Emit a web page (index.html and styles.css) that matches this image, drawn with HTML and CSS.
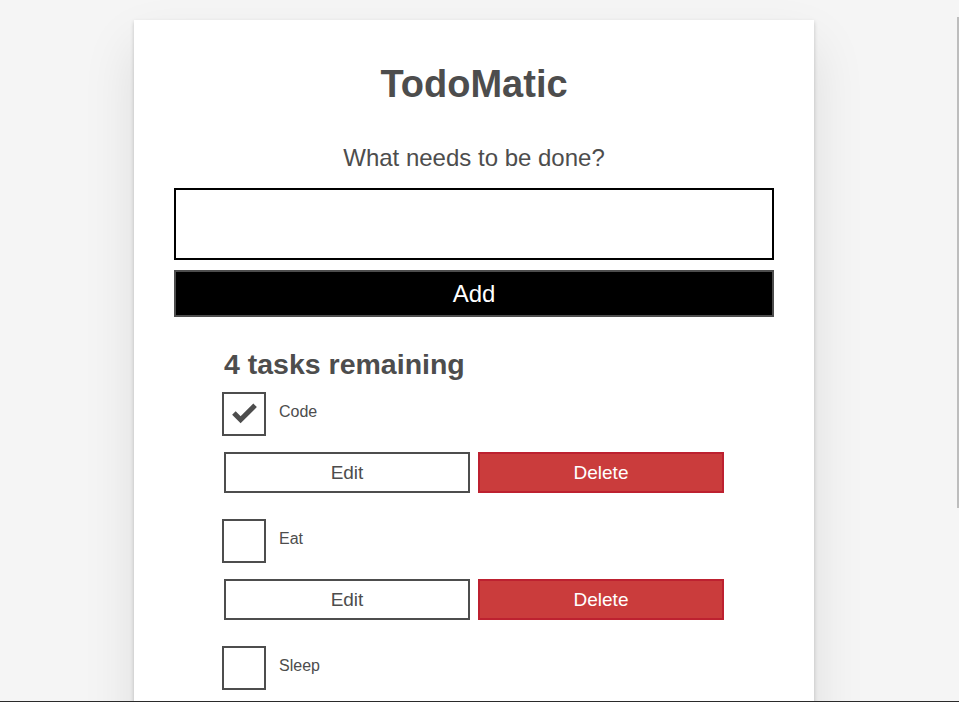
FILE: index.html
```html
<!DOCTYPE html>
<html lang="en">
<head>
<meta charset="utf-8">
<title>TodoMatic</title>
<link rel="stylesheet" href="styles.css">
</head>
<body>
<div class="page">
  <main class="todoapp">
    <h1 class="title">TodoMatic</h1>
    <form class="new-todo">
      <label class="label-lg" for="new-todo-input">What needs to be done?</label>
      <input class="input-lg" id="new-todo-input" type="text" autocomplete="off">
      <button class="btn btn-primary btn-lg" type="button">Add</button>
    </form>
    <section class="list-section">
      <h2 class="list-heading">4 tasks remaining</h2>
      <ul class="todo-list">
        <li class="todo">
          <div class="cb-row">
            <span class="cb-box">
              <svg class="check" width="40" height="40" viewBox="0 0 40 40"><polyline points="9.9,19.1 16.6,25.8 31.1,11.3" fill="none" stroke="#4d4d4d" stroke-width="5" stroke-linejoin="miter" stroke-linecap="butt"/></svg>
            </span>
            <span class="cb-label">Code</span>
          </div>
          <div class="btn-group">
            <button class="btn btn-plain" type="button">Edit</button>
            <button class="btn btn-danger" type="button">Delete</button>
          </div>
        </li>
        <li class="todo">
          <div class="cb-row">
            <span class="cb-box"></span>
            <span class="cb-label">Eat</span>
          </div>
          <div class="btn-group">
            <button class="btn btn-plain" type="button">Edit</button>
            <button class="btn btn-danger" type="button">Delete</button>
          </div>
        </li>
        <li class="todo">
          <div class="cb-row">
            <span class="cb-box"></span>
            <span class="cb-label">Sleep</span>
          </div>
          <div class="btn-group">
            <button class="btn btn-plain" type="button">Edit</button>
            <button class="btn btn-danger" type="button">Delete</button>
          </div>
        </li>
        <li class="todo">
          <div class="cb-row">
            <span class="cb-box"></span>
            <span class="cb-label">Repeat</span>
          </div>
          <div class="btn-group">
            <button class="btn btn-plain" type="button">Edit</button>
            <button class="btn btn-danger" type="button">Delete</button>
          </div>
        </li>
      </ul>
    </section>
  </main>
</div>
<div class="scroll-thumb"></div>
<div class="bottom-edge"></div>
</body>
</html>
```

FILE: styles.css
```css
html, body {
  margin: 0;
  padding: 0;
  height: 100%;
  overflow: hidden;
}

body {
  background: #f5f5f5;
  color: #4d4d4d;
  font-family: Arial, "Liberation Sans", sans-serif;
  font-size: 16px;
  line-height: 1.25;
}

.page {
  width: 948px;
  display: flex;
  justify-content: center;
}

.todoapp {
  width: 680px;
  box-sizing: border-box;
  background: #fff;
  margin: 20px 0 40px;
  padding: 40px;
  box-shadow: 0 2px 4px 0 rgba(0, 0, 0, 0.2), 0 25px 50px 0 rgba(0, 0, 0, 0.1);
  display: flex;
  flex-direction: column;
}

.title {
  margin: 0;
  padding-top: 2px;
  text-align: center;
  font-size: 38px;
  line-height: 45px;
  font-weight: bold;
}

.new-todo {
  display: flex;
  flex-direction: column;
  margin-top: 31px;
}

.label-lg {
  display: block;
  text-align: center;
  font-size: 24px;
  line-height: 24px;
  padding: 8px;
  margin-bottom: 10px;
}

.input-lg {
  box-sizing: border-box;
  width: 100%;
  height: 72px;
  margin: 0;
  padding: 20px;
  border: 2px solid #000;
  font: 24px Arial, "Liberation Sans", sans-serif;
  color: #4d4d4d;
  background: #fff;
  outline: none;
}

.btn {
  box-sizing: border-box;
  margin: 0;
  padding: 8px 10px 7px;
  border: 2px solid #4d4d4d;
  font-family: Arial, "Liberation Sans", sans-serif;
  line-height: normal;
  cursor: pointer;
}

.btn-lg {
  width: 100%;
  margin-top: 10px;
  height: 47px;
  font-size: 24px;
  padding-top: 7px;
}

.btn-primary {
  background: #000;
  color: #fff;
}

.list-section {
  width: 500px;
  align-self: center;
  margin-top: 29px;
}

.list-heading {
  margin: 0;
  font-size: 28.5px;
  line-height: 36px;
  font-weight: bold;
}

.todo-list {
  list-style: none;
  margin: 10px 0 0;
  padding: 0;
  display: flex;
  flex-direction: column;
  gap: 26px;
}

.todo {
  display: flex;
  flex-direction: column;
}

.cb-row {
  display: flex;
  align-items: flex-start;
  margin-left: -2px;
  height: 44px;
}

.cb-box {
  box-sizing: border-box;
  width: 44px;
  height: 44px;
  border: 2px solid #4d4d4d;
  flex: none;
}

.check {
  display: block;
}

.cb-label {
  font-size: 16px;
  line-height: 20px;
  padding: 10px 0 0 13px;
}

.btn-group {
  display: flex;
  gap: 8px;
  margin-top: 16px;
}

.btn-group .btn {
  flex: 1 1 0;
  height: 41px;
  font-size: 19px;
}

.btn-plain {
  background: #fff;
  color: #4d4d4d;
}

.btn-danger {
  background: #ca3c3c;
  border-color: #bd2130;
  color: #fff;
}

.scroll-thumb {
  position: fixed;
  right: 0;
  top: 17px;
  width: 2px;
  height: 491px;
  background: #bdbdbd;
}

.bottom-edge {
  position: fixed;
  left: 0;
  right: 0;
  bottom: 0;
  height: 1px;
  background: #2a2a2a;
}
```
